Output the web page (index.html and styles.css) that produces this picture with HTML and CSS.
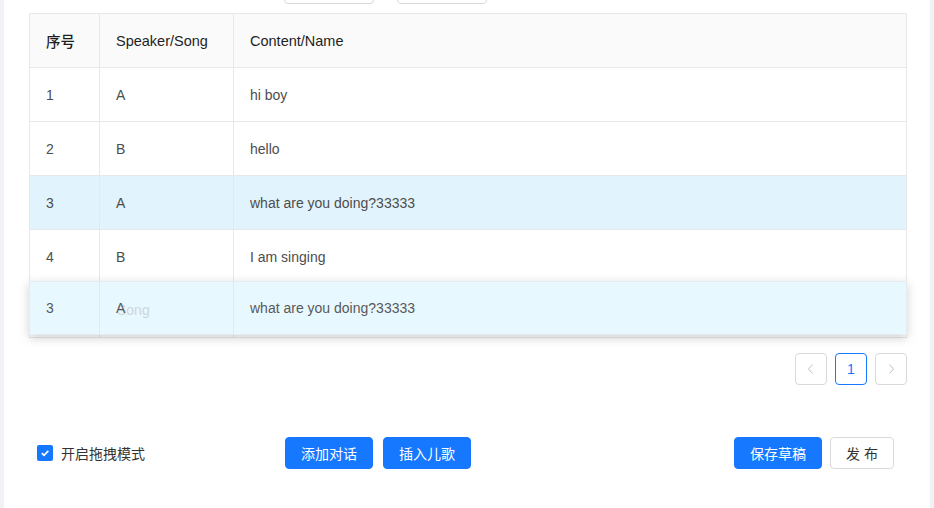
FILE: index.html
```html
<html>
<head>
    <link rel="stylesheet" href="styles.css">
</head>
<body>
    <div class="content">
        <div class="toolbar">
            <button class="tool-btn"></button>
            <button class="tool-btn"></button>
        </div>

        <div class="table-wrap">
            <table class="dialog-table">
                <colgroup>
                    <col class="col-index">
                    <col class="col-speaker">
                    <col>
                </colgroup>
                <thead>
                    <tr>
                        <th>序号</th>
                        <th>Speaker/Song</th>
                        <th>Content/Name</th>
                    </tr>
                </thead>
                <tbody>
                    <tr><td>1</td><td>A</td><td>hi boy</td></tr>
                    <tr><td>2</td><td>B</td><td>hello</td></tr>
                    <tr class="dragging"><td>3</td><td>A</td><td>what are you doing?33333</td></tr>
                    <tr><td>4</td><td>B</td><td>I am singing</td></tr>
                    <!-- slot under the drag ghost -->
                    <tr><td></td><td></td><td></td></tr>
                </tbody>
            </table>

            <!-- drag ghost -->
            <div class="ghost">
                <div class="ghost-cell col-index">3</div>
                <div class="ghost-cell col-speaker">
                    <span class="ghost-faded">Song</span>
                    <span class="ghost-text">A</span>
                </div>
                <div class="ghost-cell ghost-content">what are you doing?33333</div>
            </div>
        </div>

        <div class="pagination">
            <button class="page-btn disabled">
                <svg width="14" height="14" viewBox="0 0 14 14"><path d="M8.5 2.5 4.5 7l4 4.5" fill="none" stroke="currentColor" stroke-width="1"/></svg>
            </button>
            <button class="page-btn active">1</button>
            <button class="page-btn disabled">
                <svg width="14" height="14" viewBox="0 0 14 14"><path d="M5.5 2.5 9.5 7l-4 4.5" fill="none" stroke="currentColor" stroke-width="1"/></svg>
            </button>
        </div>

        <div class="footer">
            <label class="drag-mode">
                <span class="checkbox">
                    <svg width="10" height="10" viewBox="0 0 10 10"><path d="M1.8 5.2 4 7.3 8.3 2.8" fill="none" stroke="#fff" stroke-width="1.8"/></svg>
                </span>
                开启拖拽模式
            </label>
            <div class="actions">
                <button class="btn primary">添加对话</button>
                <button class="btn primary">插入儿歌</button>
            </div>
            <div class="actions">
                <button class="btn primary">保存草稿</button>
                <button class="btn publish">发 布</button>
            </div>
        </div>
    </div>
</body>
</html>
```

FILE: styles.css
```css
body {
    margin: 0;
    background-color: #f0f2f5;
    font-family: "Liberation Sans", "Noto Sans CJK SC", sans-serif;
    font-size: 14px;
    color: #555;
}
.content {
    background-color: #fff;
    margin: 0 4px;
    padding: 0 23px 0 25px;
    height: 508px;
    box-sizing: border-box;
}
.toolbar {
    height: 4px;
    overflow: hidden;
    display: flex;
    align-items: flex-end;
    gap: 23px;
    padding-left: 255px;
    margin-bottom: 9px;
}
.tool-btn {
    width: 90px;
    height: 32px;
    flex: none;
    border: 1px solid #d9d9d9;
    border-radius: 4px;
    background: #fff;
}
.table-wrap {
    position: relative;
}
.dialog-table {
    width: 100%;
    border-collapse: collapse;
    table-layout: fixed;
    border: 1px solid #e8e8e8;
    font-family: inherit;
    font-size: 14px;
    color: #4d4d4d;
}
.col-index {
    width: 70px;
}
.col-speaker {
    width: 134px;
}
.dialog-table th,
.dialog-table td {
    height: 54px;
    padding: 0 16px;
    text-align: left;
    border: 1px solid #e8e8e8;
}
.dialog-table th {
    background-color: #fafafa;
    color: #1f1f1f;
    font-size: 14.5px;
    font-weight: 500;
}
.dialog-table tr.dragging td {
    background-color: #e1f3fc;
}
.ghost {
    position: absolute;
    left: 0;
    right: 0;
    top: 268px;
    height: 54px;
    display: flex;
    background-color: #e8f8ff;
    border: 1px solid #e4ecf0;
    box-sizing: border-box;
    box-shadow: 0 3px 10px rgba(0, 0, 0, 0.18);
}
.ghost-cell {
    position: relative;
    display: flex;
    align-items: center;
    padding-left: 16px;
    box-sizing: border-box;
    border-right: 1px solid #dfeaf0;
    color: #595959;
    flex: none;
}
.ghost-cell.col-index {
    width: 70px;
}
.ghost-cell.col-speaker {
    width: 134px;
}
.ghost-content {
    flex: 1;
    border-right: none;
}
.ghost-text {
    position: relative;
}
.ghost-faded {
    position: absolute;
    left: 17px;
    top: 20px;
    color: #ccd6dc;
}
.pagination {
    display: flex;
    justify-content: flex-end;
    gap: 8px;
    margin-top: 15px;
}
.page-btn {
    width: 32px;
    height: 32px;
    border: 1px solid #d9d9d9;
    border-radius: 4px;
    background: #fff;
    display: flex;
    justify-content: center;
    align-items: center;
    font-family: inherit;
    font-size: 14px;
    padding: 0;
}
.page-btn.disabled {
    color: #bfbfbf;
}
.page-btn.active {
    border-color: #1677ff;
    color: #1677ff;
}
.footer {
    display: grid;
    grid-template-columns: 248px 1fr auto;
    align-items: center;
    margin-top: 52px;
    padding: 0 13px 0 8px;
}
.drag-mode {
    display: flex;
    align-items: center;
    gap: 8px;
    color: #333;
}
.checkbox {
    width: 16px;
    height: 16px;
    border-radius: 2px;
    background-color: #1677ff;
    display: flex;
    justify-content: center;
    align-items: center;
}
.actions {
    display: flex;
    gap: 10px;
}
.actions:last-child {
    gap: 8px;
}
.btn {
    height: 32px;
    width: 88px;
    border-radius: 4px;
    font-family: inherit;
    font-size: 14px;
    border: 1px solid #d9d9d9;
    background: #fff;
    color: #333;
}
.btn.primary {
    background-color: #1677ff;
    border-color: #1677ff;
    color: #fff;
}
.btn.publish {
    width: 64px;
}
```
